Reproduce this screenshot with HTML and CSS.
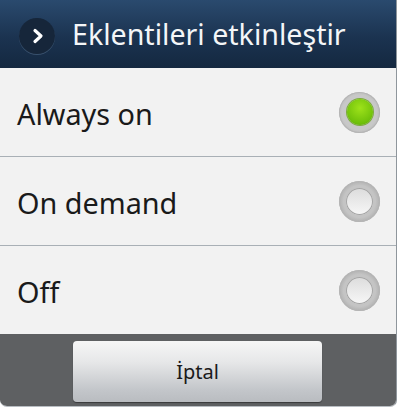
FILE: index.html
```html
<!DOCTYPE html>
<html>
<head>
<meta charset="utf-8">
<link rel="stylesheet" href="styles.css">
</head>
<body>
<div class="dialog">
  <div class="header">
    <div class="hicon">
      <svg width="14" height="16" viewBox="0 0 14 16"><path d="M4 2.5 L10 8 L4 13.5" fill="none" stroke="#ffffff" stroke-width="3.2" stroke-linecap="round" stroke-linejoin="round"/></svg>
    </div>
    <div class="title">Eklentileri etkinleştir</div>
  </div>
  <div class="list">
    <div class="row"><span class="label">Always on</span><span class="radio checked"><span class="dot"></span></span></div>
    <div class="row"><span class="label">On demand</span><span class="radio"><span class="dot"></span></span></div>
    <div class="row"><span class="label">Off</span><span class="radio"><span class="dot"></span></span></div>
  </div>
  <div class="footer">
    <div class="btn">İptal</div>
  </div>
</div>
</body>
</html>
```
FILE: styles.css
```css
html, body {
  margin: 0;
  padding: 0;
  background: #ffffff;
}
body {
  font-family: "Noto Sans", "Open Sans", sans-serif;
  width: 400px;
  height: 409px;
  overflow: hidden;
}
.dialog {
  width: 396px;
  border-right: 1px solid #8f969c;
  border-bottom: 1px solid #b8bdc2;
  border-bottom-right-radius: 7px;
  border-bottom-left-radius: 7px;
  overflow: hidden;
}
.header {
  height: 68px;
  background: linear-gradient(#2a4a6e, #1b3350 55%, #142840);
  display: flex;
  align-items: center;
  box-sizing: border-box;
  padding-left: 19px;
}
.hicon {
  width: 36px;
  height: 36px;
  border-radius: 50%;
  background: #16263a;
  box-shadow: 0 1px 0 rgba(120, 150, 180, 0.35);
  display: flex;
  align-items: center;
  justify-content: center;
  margin-right: 17px;
  margin-top: 3px;
}
.hicon svg {
  margin-left: 2px;
}
.title {
  color: #f4f6f8;
  font-size: 28.6px;
  margin-top: -1px;
}
.list {
  background: #f2f2f2;
}
.row {
  height: 88px;
  display: flex;
  align-items: center;
  justify-content: space-between;
  padding: 0 16px 0 17px;
  border-bottom: 1px solid #a9b0b6;
}
.row:last-child {
  border-bottom: none;
}
.label {
  font-size: 28.8px;
  color: #1a1a1a;
  margin-top: 2px;
}
.radio {
  width: 41px;
  height: 41px;
  border-radius: 50%;
  background: radial-gradient(circle, #c4c4c4 55%, #b2b2b2 70%, #c9c9c9 100%);
  box-shadow: inset 0 0 0 1px #b5b5b5;
  display: flex;
  align-items: center;
  justify-content: center;
}
.radio .dot {
  width: 27px;
  height: 27px;
  border-radius: 50%;
  background: linear-gradient(#dcdcdc, #f7f7f7);
  box-shadow: inset 0 0 0 1px #a4a4a4;
}
.radio.checked {
  background: radial-gradient(circle, #c8c8c8 60%, #b8b8b8 75%, #cfcfcf 100%);
}
.radio.checked .dot {
  width: 26px;
  height: 26px;
  background: radial-gradient(circle at 50% 35%, #9ee21a, #6fc00a 70%, #5aa506 100%);
  box-shadow: 0 0 0 1px #7bab3a;
}
.footer {
  height: 72px;
  background: #5e6062;
  display: flex;
  justify-content: center;
  padding-top: 7px;
  box-sizing: border-box;
}
.btn {
  width: 249px;
  height: 61px;
  border-radius: 4px;
  background: linear-gradient(#f6f6f6, #e6e7e8 35%, #c3c6ca 80%, #b9bcc0);
  box-shadow: 0 1px 1px rgba(0, 0, 0, 0.4);
  display: flex;
  align-items: center;
  justify-content: center;
  font-size: 20px;
  color: #1a1a1a;
  margin-left: -1px;
}
```
